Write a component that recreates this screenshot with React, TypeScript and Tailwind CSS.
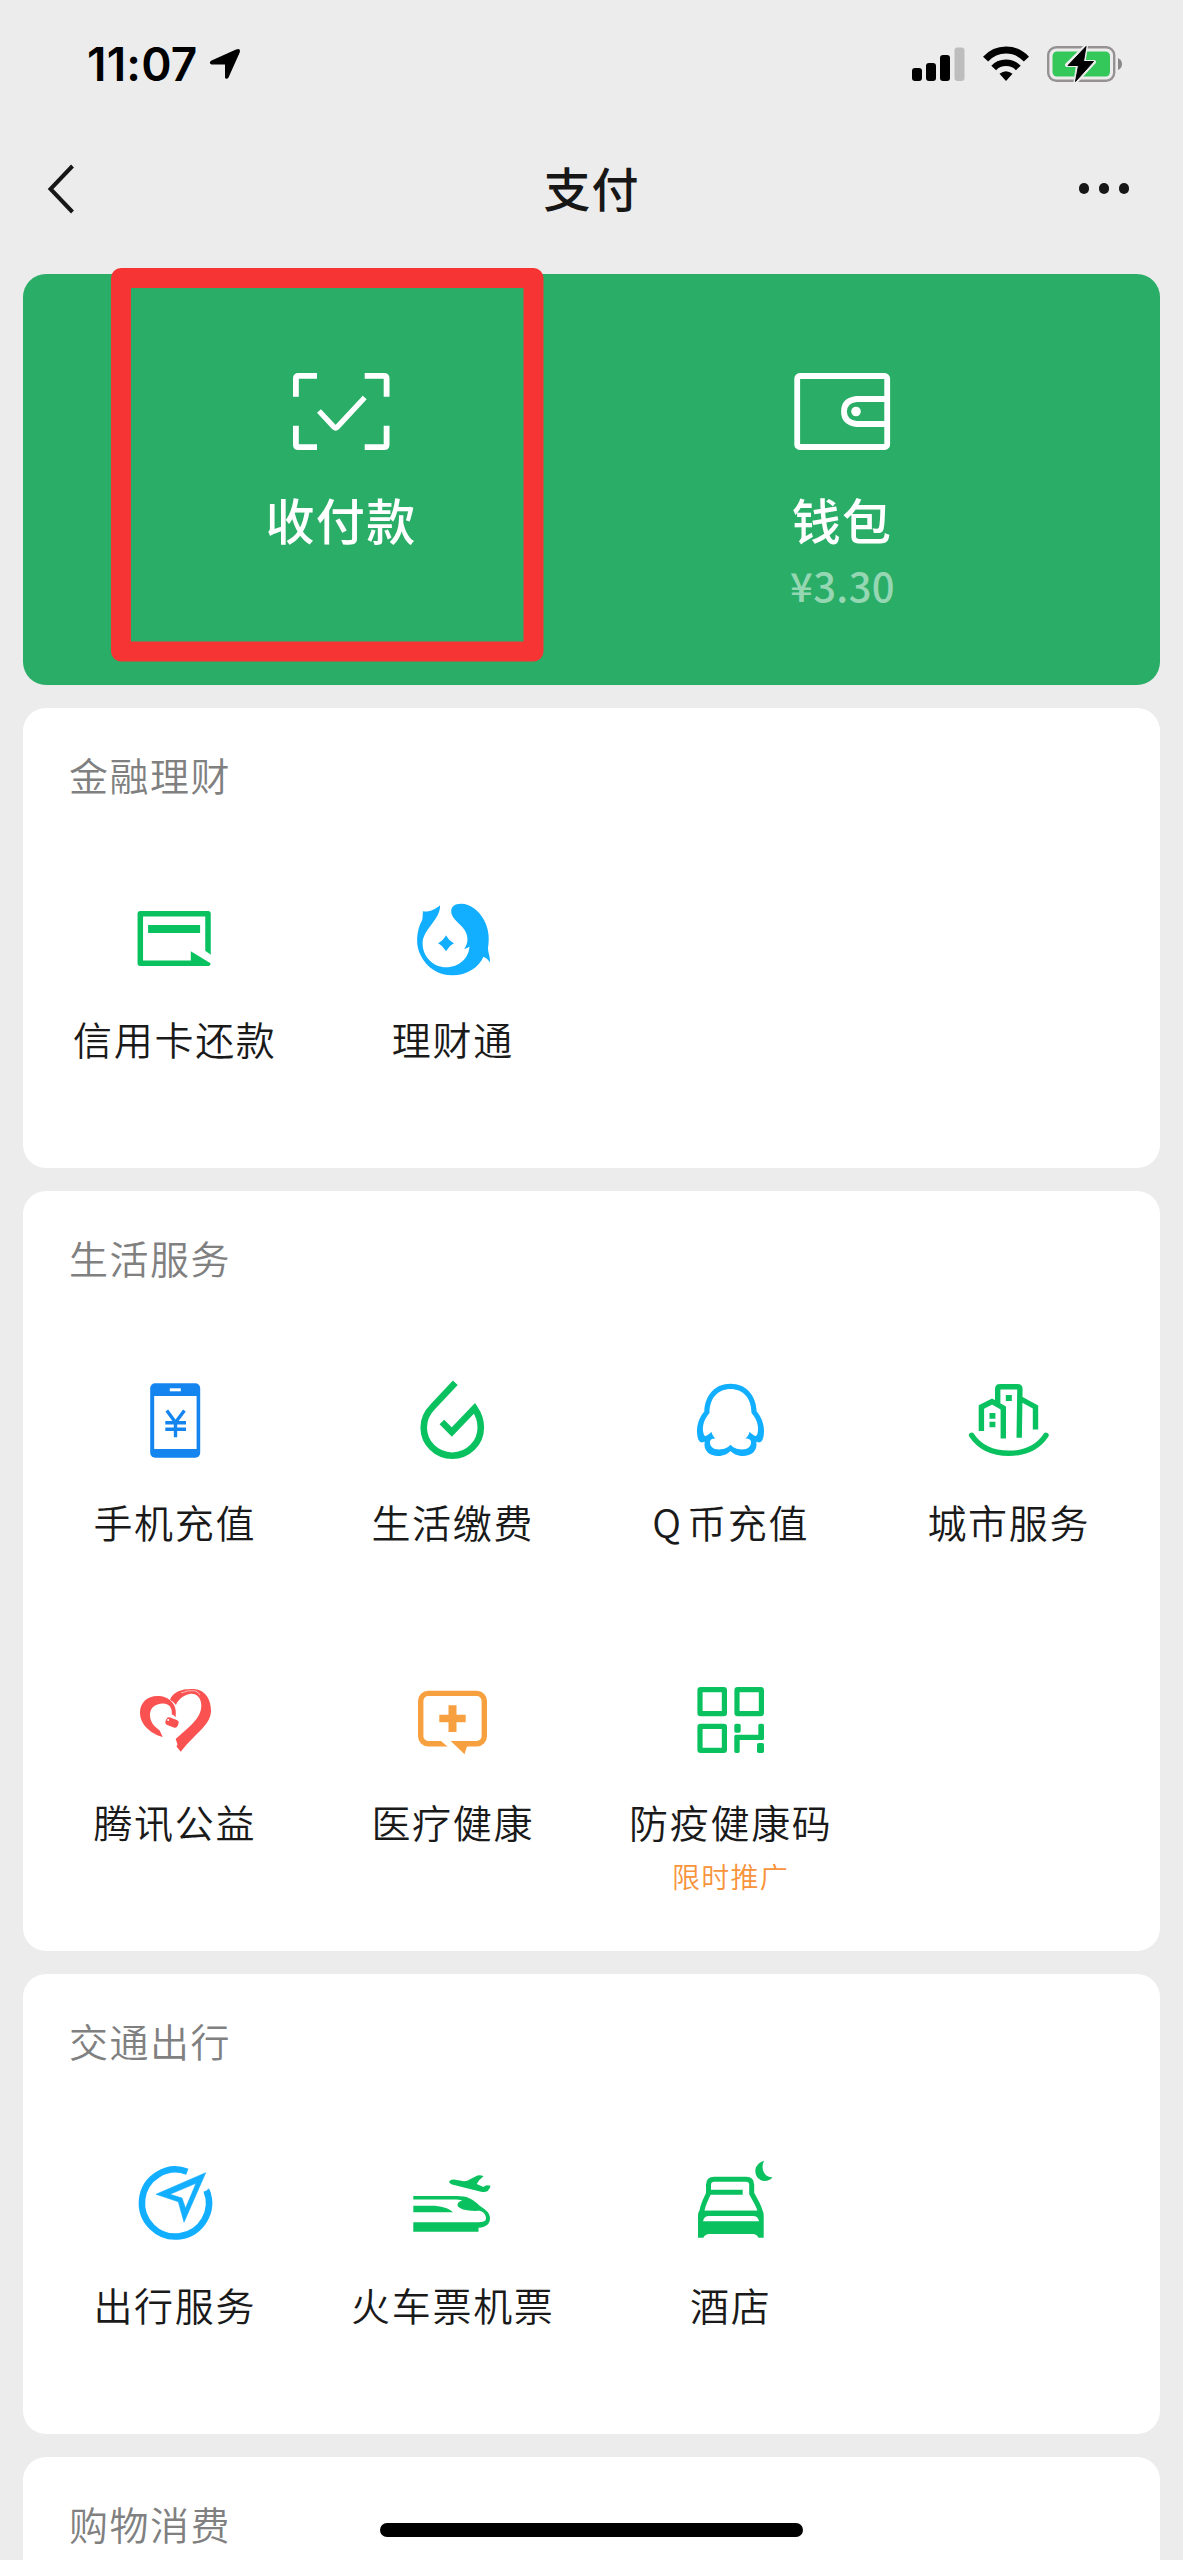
import type { ReactNode } from "react";

const GREEN = "#0ac160";
const BLUE = "#12aeff";

function Icon({ children }: { children: ReactNode }) {
  return (
    <svg viewBox="0 0 100 100" className="block h-[100px] w-[100px]" fill="none">
      {children}
    </svg>
  );
}

const CreditCardIcon = () => (
  <Icon>
    <path d="M84 67V25.8H16.3V75.3H72" stroke={GREEN} strokeWidth="5.5" strokeLinejoin="round" />
    <path d="M24.1 37H76.1V45H24.1Z" fill={GREEN} />
    <path d="M66.8 63.2L86.5 75.2Q86.5 78 84 78H66.8Z" fill={GREEN} />
    <path d="M80 62L88 67.5V70.5L80 66Z" fill="#fff" />
  </Icon>
);

const FishIcon = () => (
  <Icon>
    <path
      d="M38.1 17.2C34 21 27 24.5 20.9 23.2C20.8 26 20.8 29 20.2 32C14 43 13.5 58 18.5 67C24.5 79.5 36 87.3 50.5 87.3C65 87.3 76.5 79.5 81.5 68.7C84 69.7 86.5 72 88 74.5C88.3 68.5 86 65 86 60C87.5 51 87 41 82 32C77 22.5 68 15.5 58.8 15.7C53 15.7 49.2 18.5 49.2 23C49.2 34 65.5 37 65.5 51.5C65.5 55 64 58 62.2 61.2C64.5 60.5 66 59.5 67.4 58.5C67 70 57 79.3 44.3 79.3C31 79.3 20.6 68.5 20.6 55.5C20.6 41 38.5 32 38.1 17.2Z"
      fill={BLUE}
    />
    <path d="M44 48.5Q46.5 53 50.8 55.3Q46.5 57.6 44 62.1Q41.5 57.6 37.2 55.3Q41.5 53 44 48.5Z" fill={BLUE} stroke={BLUE} strokeWidth="1.2" />
  </Icon>
);

const PhoneIcon = () => (
  <Icon>
    <rect x="26.2" y="12.3" width="50" height="74.4" rx="5" fill="#1485ee" />
    <path d="M30.2 25H72.6V78H30.2Z" fill="#fff" />
    <path d="M45.8 17.3H56.8V20.3H45.8Z" fill="#fff" />
    <path d="M42.8 39.5L51.5 51.5L60.4 39.5M51.5 51V66.2M41.3 51.8H62M41.3 58.2H62" stroke="#1485ee" strokeWidth="3.4" />
  </Icon>
);

const DropIcon = () => (
  <Icon>
    <path
      d="M53.3 11.7L31 35.5C25 41.5 21.7 48.5 21.7 56.5A28.55 28.2 0 0 0 78.8 56.5C78.8 49 76.5 43 72.6 37.3L49.8 61L39.9 51"
      stroke={GREEN}
      strokeWidth="6.6"
    />
  </Icon>
);

const PenguinIcon = () => (
  <Icon>
    <path
      fillRule="evenodd"
      d="M50.5 12.7C66 12.7 76 24 76.7 40.5C82 46.5 84 54 84 60C84 67 82 71.5 79 71.5L76.3 70.7C78 80 71 85 63 85C57 85 53 82.5 50.5 80C48 82.5 44 85 38 85C30 85 23 80 24.7 70.7L22 71.5C19 71.5 17 67 17 60C17 54 19 46.5 24.3 40.5C25 24 35 12.7 50.5 12.7ZM50.5 18C38.5 18 29.5 26.5 29.5 42C24.5 47.5 22 55 23.2 61C23.7 64.5 25 65.5 26.3 64.7C28 63.8 30 62.5 31.5 60.8C32 63.5 33.2 65.5 35.5 67.5C32.5 67.2 30.5 68.5 30 70.5C29.5 75 33 78.5 39 78.5C45 78.5 47.5 76.5 50.5 73.8C53.5 76.5 56 78.5 62 78.5C68 78.5 71.5 75 71 70.5C70.5 68.5 68.5 67.2 65.5 67.5C67.8 65.5 69 63.5 69.5 60.8C71 62.5 73 63.8 74.7 64.7C76 65.5 77.3 64.5 77.8 61C79 55 76.5 47.5 71.5 42C71.5 26.5 62.5 18 50.5 18Z"
      fill={BLUE}
    />
  </Icon>
);

const CityIcon = () => (
  <Icon>
    <path d="M39.7 33V18Q39.7 15.7 42 15.7H59.5Q61.9 15.7 61.9 18L61.2 66.7M23.4 60V36L34 30.5L45.3 37V67.5M62 27.5L77.5 36V58.5" stroke={GREEN} strokeWidth="5.4" />
    <path d="M47.8 24H53.8V30H47.8ZM31.5 42H37.4V47.7H31.5ZM31.5 50.7H37.4V56.3H31.5Z" fill={GREEN} />
    <path d="M13.6 64.3C21 75.5 34 82.3 50.8 82.3C67.6 82.3 80.6 75.5 88 64.3" stroke={GREEN} strokeWidth="5.4" strokeLinecap="round" />
  </Icon>
);

const HeartIcon = () => (
  <Icon>
    <path d="M38.7 66C26 62.5 16 53 16 41.7C16 31.5 23.5 25 33.3 25C45 25 54 33 51.5 46.5C50.5 44.5 49 43.5 47.8 43.5C48.5 36 44.5 32 38 32.5C30 33 26.3 38 26 43C25.7 52 31 55.5 35.7 59.5Z" fill="#fa5151" />
    <path d="M46 28.7C49.5 20.5 58 17.5 70 18C82 19 87 29 87 40C86.5 54 72.7 61 56.7 80.7L52.5 75.5L53.5 73.5L51.7 68C61.5 58.5 78 48 77.3 34C77 26 72 22 66.5 22.8C58.5 24.5 53.5 29.5 52 34Q49.5 30.5 46 28.7Z" fill="#fa5151" />
    <path d="M57 22Q64 18.8 71 19.8Q74.5 21 76 24" stroke="#fff" strokeWidth="0.6" />
    <rect x="41.5" y="47.5" width="13" height="8" rx="3" transform="rotate(22 48 51.5)" fill="#fa5151" />
    <circle cx="44.2" cy="49" r="1" fill="#fff" />
  </Icon>
);

const MedicalIcon = () => (
  <Icon>
    <rect x="18.7" y="22.4" width="63.6" height="50.3" rx="7.5" stroke="#f7a040" strokeWidth="5.4" />
    <path d="M37.3 43.7H46.5V34.3H54.5V43.7H63.7V51.3H54.5V61H46.5V51.3H37.3Z" fill="#f7a040" />
    <path d="M38.5 69.5H50L56 76H46Z" fill="#fff" />
    <path d="M48.7 70H66V75.3H65L62.5 83.3Z" fill="#f7a040" />
  </Icon>
);

const QrIcon = () => (
  <Icon>
    <g stroke={GREEN} strokeWidth="5.2">
      <rect x="20" y="18.7" width="24.4" height="24" rx="0.6" />
      <rect x="57" y="18.7" width="24.4" height="24" rx="0.6" />
      <rect x="20" y="55.3" width="24.4" height="24" rx="0.6" />
    </g>
    <g fill={GREEN}>
      <rect x="54.3" y="52.7" width="6.4" height="9" rx="1.8" />
      <rect x="77" y="72" width="7" height="10" rx="1.8" />
      <path d="M78.3 54.5Q78.3 52.7 80 52.7H82.2Q84 52.7 84 54.5V67.5Q84 69 82.5 69H59.7V80.2Q59.7 82 58 82H56Q54.3 82 54.3 80.2V65.2Q54.3 63.7 55.8 63.7H78.3Z" />
    </g>
  </Icon>
);

const CompassIcon = () => (
  <Icon>
    <path d="M63.3 17.7A33.5 33.5 0 1 0 82.5 36.5" stroke={BLUE} strokeWidth="6.5" />
    <path
      fillRule="evenodd"
      d="M81.7 18.7L32 40.3L54.3 47.7L60 68.3ZM72 29.3L46 40.3L58 44L61.5 54.3Z"
      fill={BLUE}
      stroke={BLUE}
      strokeWidth="0.6"
      strokeLinejoin="round"
    />
    <path d="M82.5 38L84.2 34L87 41L81 40Z" fill={BLUE} />
  </Icon>
);

const TrainIcon = () => (
  <Icon>
    <path
      fillRule="evenodd"
      d="M11.3 42H54.7C66 42 70.5 45 78 52C84.5 56 88 59.5 88 64.3C88 70 84 73.5 76.5 73.8V77.7H11.3V68.3H70C80 68.3 84 68 84 64.3C84 61 81.5 57.5 77.5 56.8C67 57.5 56 55.5 55.5 51C55.5 48.5 58.5 46.5 61 46.5C58 45.5 55 45.5 52 45.5H11.3Z"
      fill={GREEN}
    />
    <path d="M11.3 51.7H30C38 51.7 47 54 51 58.3H11.3Z" fill={GREEN} />
    <path d="M47 27.7Q48.5 25.3 52 25.5L62 27.2Q65.5 27.2 68.5 25L75.5 21.5Q78.5 20.7 81.5 22.2Q77 25.5 74.7 30L81.5 33Q83.5 30.5 88.5 31.8Q88.3 34.5 85.7 37Q83.5 38.5 79 37.8L50 30.5Q47.3 29.5 47 27.7Z" fill={GREEN} />
  </Icon>
);

const HotelIcon = () => (
  <Icon>
    <path d="M21.5 60C22 52 25.5 46 28.5 39.5V31Q28.5 25.2 34.3 25.2H66Q71.7 25.2 71.7 31V39.5C76 48 80 53 80.7 60" stroke={GREEN} strokeWidth="5" />
    <path d="M28.5 38.3H62.7M21 59.3H81" stroke={GREEN} strokeWidth="5" />
    <path
      fillRule="evenodd"
      d="M18 83.7V62Q18 57 20 56.8H82Q83.7 57 83.7 62V83.7H78.5Q76.5 80 73 80H29Q25.5 80 23.3 83.7ZM23 67.3H79Q78 62 73 62H29Q24 62 23 67.3Z"
      fill={GREEN}
    />
    <path d="M84 6.7C78.5 8.5 75.3 12.5 75.3 17C75.3 22.5 79.5 27 84.5 27C88 27 90.5 25.7 92.5 23.2C86.5 24 79.5 17 84 6.7Z" fill={GREEN} />
  </Icon>
);

type Service = { label: string; icon: ReactNode; note?: string };

function Card({ title, services }: { title: string; services: Service[] }) {
  return (
    <section className="mx-[23px] mb-[23px] rounded-[23px] bg-white pt-[36px]">
      <h2 className="pl-[46px] text-[39px] leading-[60px] font-[350] tracking-[1.5px] text-[#808080]">{title}</h2>
      <div className="mt-[64px] ml-[12px] grid w-[1112px] grid-cols-4">
        {services.map((s) => (
          <div key={s.label} className="flex h-[300px] flex-col items-center pt-[20px]">
            {s.icon}
            <div className="mt-[20px] pl-[1.6px] text-[39px] leading-[60px] font-[350] tracking-[1.7px] [word-spacing:-6px] whitespace-nowrap text-[#1a1a1a]">
              {s.label}
            </div>
            {s.note && <div className="mt-[5px] pl-[1px] text-[28px] leading-[40px] font-[350] tracking-[1.2px] text-[#f7933a]">{s.note}</div>}
          </div>
        ))}
      </div>
    </section>
  );
}

function StatusBar() {
  return (
    <div className="flex h-[128px] items-center pr-[60px] pl-[87px] text-black">
      <span className="font-['Inter'] text-[46px] leading-none font-semibold tracking-[0.2px]">11:07</span>
      <svg viewBox="0 0 32 32" className="ml-[11px] h-[32px] w-[32px]">
        <path d="M27 1.6Q32 -0.5 30.7 4.5L19.5 29.5Q18 31.8 16 30V16.5H2.5Q-0.5 15 2 12.7Z" fill="#000" />
      </svg>
      <div className="ml-auto flex items-center">
        <svg viewBox="0 0 53 36" className="h-[36px] w-[53px]">
          <rect x="0" y="22" width="10" height="13" rx="3" />
          <rect x="14" y="17" width="10" height="18" rx="3" />
          <rect x="28" y="9" width="10" height="26" rx="3" />
          <rect x="42.5" y="1.5" width="10" height="33.5" rx="3" fill="#bdbdbd" />
        </svg>
        <svg viewBox="0 0 46 36" className="ml-[18px] h-[36px] w-[46px]">
          <path d="M2.6 13.1Q11 4 23 4T43.4 13.1" stroke="#000" strokeWidth="7" fill="none" />
          <path d="M10.7 22Q15.5 16.8 23 16.8T35.3 22" stroke="#000" strokeWidth="6.5" fill="none" />
          <path d="M16.5 27.8Q23 22.5 29.5 27.8L23 35Z" />
        </svg>
        <svg viewBox="0 0 76 38" className="ml-[18px] h-[38px] w-[76px]">
          <rect x="1.2" y="2.2" width="66" height="33.6" rx="8" stroke="#969294" strokeWidth="2.4" fill="none" />
          <path d="M71 13Q75 15 75 19T71 25Z" fill="#8a8688" />
          <rect x="5.5" y="6.5" width="57.5" height="25" rx="4.5" fill="#34c759" />
          <path d="M39 1L20 20H31L28.5 37L47 17H36.5Z" stroke="#ececec" strokeWidth="4" fill="#ececec" strokeLinejoin="round" />
          <path d="M39 1.5L21 20.5H31.5L28.5 36.5L46.5 16.5H36.5Z" stroke="#000" strokeWidth="1" fill="#000" strokeLinejoin="round" />
        </svg>
      </div>
    </div>
  );
}

function NavBar() {
  return (
    <div className="mb-[25px] grid h-[121px] grid-cols-3 items-center">
      <svg viewBox="0 0 30 50" className="ml-[46px] h-[50px] w-[30px]" fill="none">
        <path d="M26.5 2L4.5 25L26.5 48" stroke="#171717" strokeWidth="4" />
      </svg>
      <h1 className="pb-[5px] text-center text-[47px] leading-none font-medium tracking-[1px] text-[#171717]">支付</h1>
      <div className="flex gap-[9.5px] justify-self-end pr-[54px]">
        <i className="h-[10.5px] w-[10.5px] rounded-full bg-[#171717]" />
        <i className="h-[10.5px] w-[10.5px] rounded-full bg-[#171717]" />
        <i className="h-[10.5px] w-[10.5px] rounded-full bg-[#171717]" />
      </div>
    </div>
  );
}

function WalletPanel() {
  return (
    <section className="relative mx-[23px] mb-[23px] flex h-[411px] rounded-[23px] bg-[#2aae67] pt-[87px] text-white">
      <div className="ml-[68px] flex w-[500px] flex-col items-center">
        <svg viewBox="0 0 110 100" className="h-[100px] w-[110px]" fill="none" stroke="#fff" strokeWidth="5.8">
          <path d="M9.9 35.7V17.5Q9.9 14.9 12.5 14.9H31M78.7 14.9H98Q100.6 14.9 100.6 17.5V35.7M100.6 64.7V83.5Q100.6 86.1 98 86.1H78.7M31 86.1H12.5Q9.9 86.1 9.9 83.5V64.7" />
          <path d="M33 50L48 66Q49.6 67.600 51.2 66L78.700 36.500" strokeWidth="5.400" />
        </svg>
        <div className="mt-[28px] text-[49px] leading-[60px] font-medium tracking-[1.3px]">收付款</div>
      </div>
      <div className="flex w-[500px] flex-col items-center">
        <svg viewBox="0 0 110 100" className="h-[100px] w-[110px]" fill="none" stroke="#fff" strokeWidth="5.8">
          <rect x="11.2" y="15" width="90" height="71" rx="2.5" />
          <path d="M100 38H70.5Q58 39.500 58 50.500T70.500 63H100" />
          <circle cx="70" cy="50.500" r="4.800" fill="#fff" stroke="none" />
        </svg>
        <div className="mt-[28px] pl-[2px] text-[49px] leading-[60px] font-medium tracking-[1.3px]">钱包</div>
        <div className="mt-[11px] pl-[3px] text-[40px] leading-[50px] font-medium tracking-[0.4px] text-[#95d6b3]">¥3.30</div>
      </div>
      <div className="absolute top-[-6px] left-[88px] h-[393.5px] w-[432.5px]">
        <svg viewBox="0 0 432.5 393.5" className="block h-full w-full">
          <rect x="10" y="10" width="412.5" height="373.5" fill="none" stroke="#f73434" strokeWidth="20" strokeLinejoin="round" />
        </svg>
      </div>
    </section>
  );
}

export default function App() {
  return (
    <main className="relative h-[2560px] w-[1183px] overflow-hidden bg-[#ececec] font-['Noto_Sans_CJK_SC',sans-serif]">
      <StatusBar />
      <NavBar />
      <WalletPanel />
      <Card
        title="金融理财"
        services={[
          { label: "信用卡还款", icon: <CreditCardIcon /> },
          { label: "理财通", icon: <FishIcon /> },
        ]}
      />
      <Card
        title="生活服务"
        services={[
          { label: "手机充值", icon: <PhoneIcon /> },
          { label: "生活缴费", icon: <DropIcon /> },
          { label: "Q 币充值", icon: <PenguinIcon /> },
          { label: "城市服务", icon: <CityIcon /> },
          { label: "腾讯公益", icon: <HeartIcon /> },
          { label: "医疗健康", icon: <MedicalIcon /> },
          { label: "防疫健康码", icon: <QrIcon />, note: "限时推广" },
        ]}
      />
      <Card
        title="交通出行"
        services={[
          { label: "出行服务", icon: <CompassIcon /> },
          { label: "火车票机票", icon: <TrainIcon /> },
          { label: "酒店", icon: <HotelIcon /> },
        ]}
      />
      <Card title="购物消费" services={[]} />
      <div className="absolute bottom-[23px] left-[380px] h-[14px] w-[423px] rounded-full bg-black" />
    </main>
  );
}
